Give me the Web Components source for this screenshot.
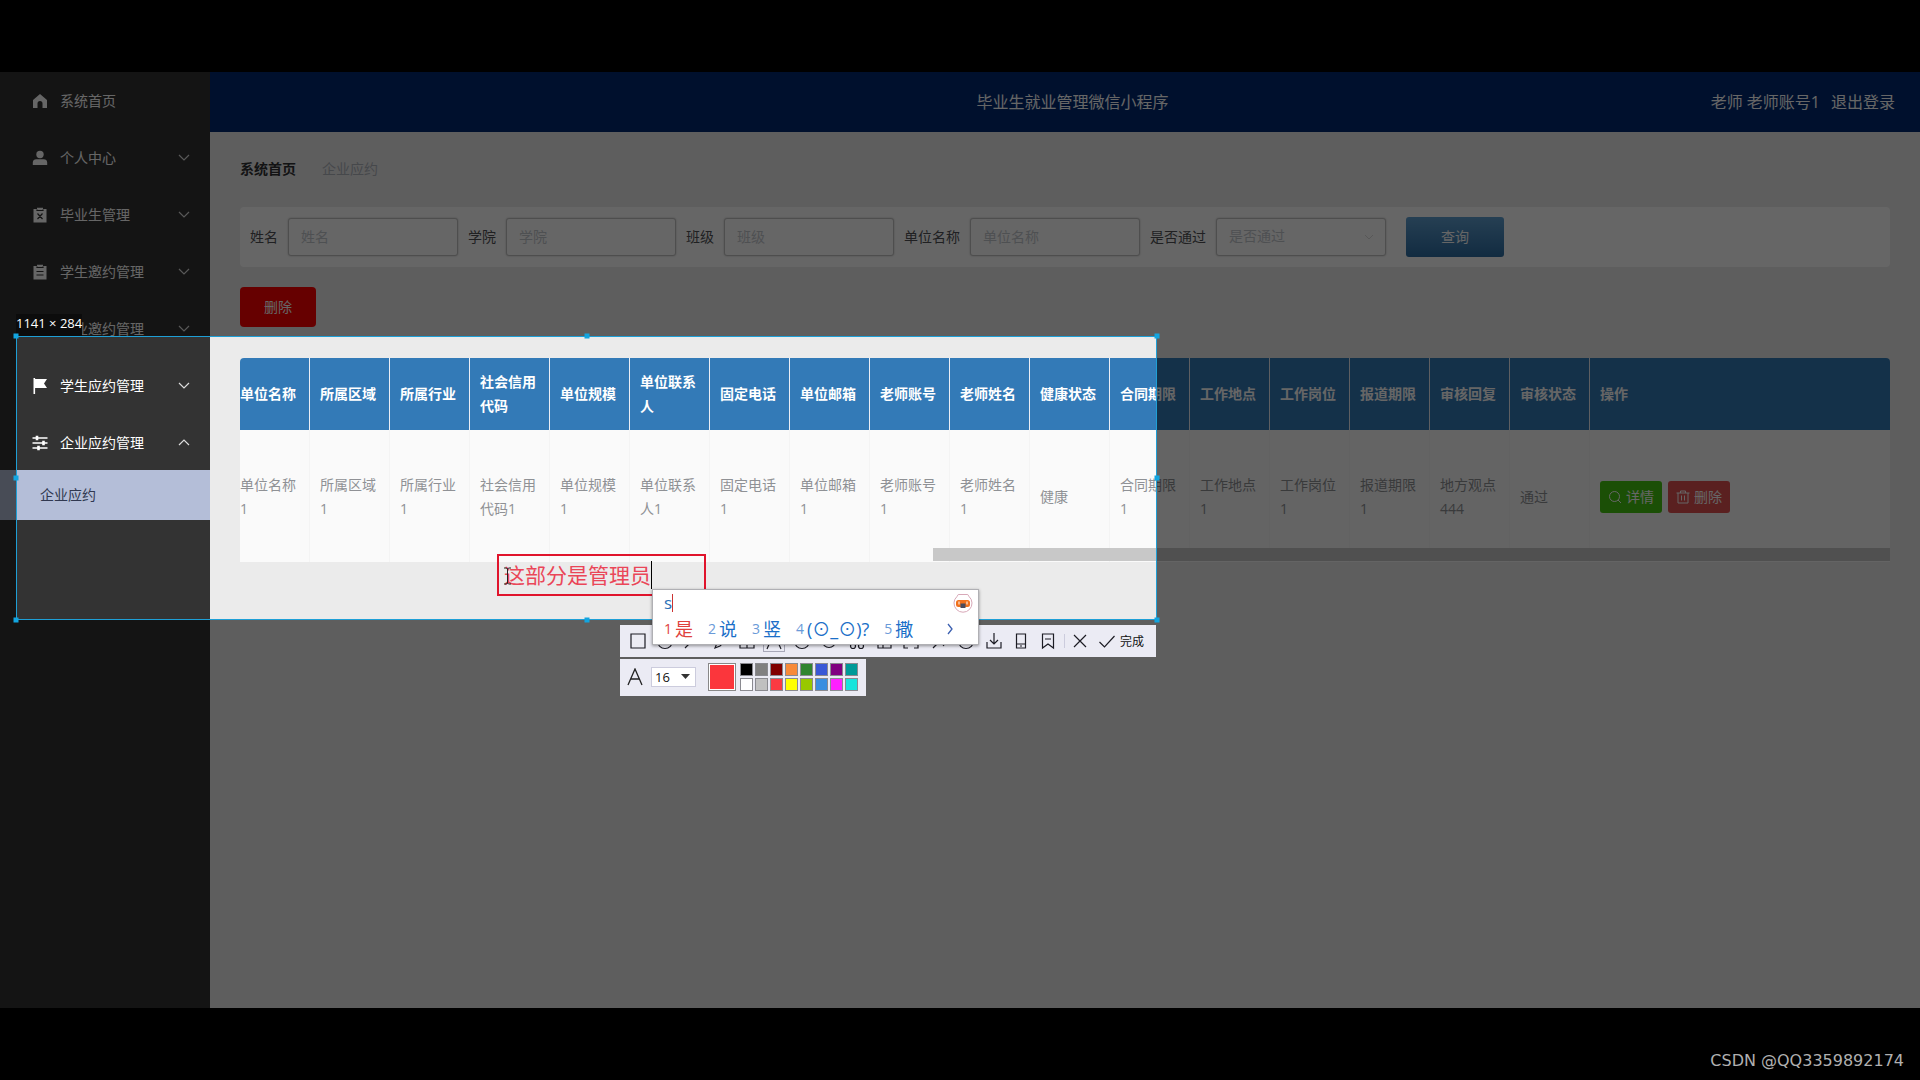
<!DOCTYPE html>
<html lang="zh-CN">
<head>
<meta charset="utf-8">
<title>毕业生就业管理微信小程序</title>
<style>
  html, body { margin: 0; height: 100%; background: #000; }
  body { font: 14px/20px "Open Sans", "Noto Sans CJK SC", sans-serif; overflow: hidden; }
</style>
</head>
<body>
<screen-frame>
  <admin-app>
    <side-nav slot="nav">
      <nav-item icon="home">系统首页</nav-item>
      <nav-item icon="user" arrow="down">个人中心</nav-item>
      <nav-item icon="clipx" arrow="down">毕业生管理</nav-item>
      <nav-item icon="clip" arrow="down">学生邀约管理</nav-item>
      <nav-item icon="grid" arrow="down">企业邀约管理</nav-item>
      <nav-item icon="flag" arrow="down">学生应约管理</nav-item>
      <nav-item icon="sliders" arrow="up">企业应约管理</nav-item>
      <nav-sub>企业应约</nav-sub>
    </side-nav>
    <app-header slot="header">
      毕业生就业管理微信小程序
      <span slot="user">老师 老师账号1</span>
      <span slot="exit">退出登录</span>
    </app-header>
    <crumb-trail></crumb-trail>
    <search-form></search-form>
    <action-bar></action-bar>
    <data-table></data-table>
  </admin-app>
  <snip-selection slot="overlay">
    <snip-note slot="note"></snip-note>
    <snip-toolbar slot="tools"></snip-toolbar>
    <color-bar slot="tools"></color-bar>
    <ime-panel slot="ime"></ime-panel>
  </snip-selection>
  <span slot="mark">CSDN @QQ3359892174</span>
</screen-frame>

<script>
const define = (name, markup) => customElements.define(name, class extends HTMLElement {
  constructor() {
    super();
    this.attachShadow({ mode: 'open' }).innerHTML =
      '<style>*{box-sizing:border-box}:host{display:block}</style>' +
      (typeof markup === 'function' ? markup(this) : markup);
  }
});

const navIcons = {
  home: '<path fill="currentColor" d="M8 1 1 7v8h4.500v-4.500a2.500 2.500 0 0 1 5 0V15H15V7z"/>',
  user: '<circle cx="8" cy="4.500" r="3.700" fill="currentColor"/><path fill="currentColor" d="M.8 15v-2.500A3.500 3.500 0 0 1 4.300 9.300h7.400a3.500 3.500 0 0 1 3.500 3.200V15z"/>',
  clipx: '<path fill="currentColor" d="M1.500 2H5V.8h6V2h3.500v13.500h-13z"/><path stroke="#333" stroke-width="1.200" fill="none" d="M5 2.500v1h6v-1M5.500 6.500l5 5.500M10.500 6.500l-5 5.500"/>',
  clip: '<path fill="currentColor" d="M1.500 2H5V.8h6V2h3.500v13.500h-13z"/><path stroke="#333" stroke-width="1.200" fill="none" d="M5 2.500v1h6v-1M4.500 7.500h7M4.500 11h7"/>',
  grid: '<path fill="currentColor" d="M1 1h6v6H1zM9 1h6v6H9zM1 9h6v6H1zM9 9h6v6H9z"/>',
  flag: '<path fill="currentColor" d="M1.500 0h1.600v1H15l-3 4.500 3 4.500H3.100v6H1.500z"/>',
  sliders: '<path stroke="currentColor" stroke-width="1.600" fill="none" d="M.5 3h15M.5 8h15M.5 13h15"/><path stroke="currentColor" stroke-width="2.600" d="M5 .8v4.400M11.500 5.800v4.400M6.500 10.800v4.400"/>'
};

/* Black frame round the recorded desktop */
define('screen-frame', `<style>
  :host { display: grid; grid-template-rows: 72px 1fr 72px; height: 100vh; }
  .view { grid-row: 2; position: relative; overflow: hidden; }
  footer { grid-row: 3; display: flex; justify-content: flex-end; align-items: center; padding: 34px 16px 0 0;
    font: 16px/24px "DejaVu Sans", sans-serif; color: #b0b0b0; }
</style><div class="view"><slot></slot><slot name="overlay"></slot></div><footer><slot name="mark"></slot></footer>`);

define('admin-app', `<style>
  :host { display: grid; grid-template-columns: 210px 1fr; grid-template-rows: 60px 1fr; height: 100%; background: #ebebeb; }
  ::slotted([slot=nav]) { grid-row: 1 / 3; }
  main { padding: 27px 30px 0; min-width: 0; display: flex; flex-direction: column; }
</style><slot name="nav"></slot><slot name="header"></slot><main><slot></slot></main>`);

define('side-nav', `<style>
  :host { background: #333; } nav { display: flex; flex-direction: column; }
</style><nav><slot></slot></nav>`);

define('nav-item', el => `<style>
  a { display: flex; align-items: center; height: 57px; padding: 0 20px 0 32px; gap: 12px; color: #fff; text-decoration: none; }
  .icon { width: 16px; height: 16px; } .label { flex: 1; }
  .arrow { width: 12px; height: 12px; }
</style><a href="#"><svg class="icon" viewBox="0 0 16 16">${navIcons[el.getAttribute('icon')]}</svg><span class="label"><slot></slot></span>${
  el.hasAttribute('arrow') ? `<svg class="arrow" viewBox="0 0 12 12"><path fill="none" stroke="#ddd" stroke-width="1.200" d="${
    el.getAttribute('arrow') === 'up' ? 'M1 8l5-5 5 5' : 'M1 3l5 5 5-5'}"/></svg>` : ''}</a>`);

define('nav-sub', `<style>
  a { display: flex; align-items: center; height: 50px; margin-top: -1px; padding-left: 40px; background: #b4bed8; color: #303850; text-decoration: none; }
</style><a href="#"><slot></slot></a>`);

define('app-header', `<style>
  :host { background: #002870; color: #fff; font-size: 16px; line-height: 24px; }
  header { display: grid; grid-template-columns: 1fr auto 1fr; align-items: center; height: 100%; padding: 0 25px 0 40px; }
  h1 { font: inherit; margin: 0; grid-column: 2; }
  .right { display: flex; justify-content: flex-end; gap: 11px; }
  a { color: inherit; text-decoration: none; }
</style><header><h1><slot></slot></h1><div class="right"><slot name="user"></slot><a href="#"><slot name="exit"></slot></a></div></header>`);

define('crumb-trail', `<style>
  nav { display: flex; gap: 26px; } a { color: #303133; font-weight: 700; text-decoration: none; }
  span { color: #b0b4bc; }
</style><nav><a href="#">系统首页</a><span>企业应约</span></nav>`);

define('search-form', `<style>
  :host { margin-top: 28px; }
  form { display: flex; align-items: center; gap: 10px; height: 60px; padding: 0 10px; background: #fff; border-radius: 4px; }
  label { display: flex; align-items: center; gap: 10px; color: #505256; }
  input, select { width: 170px; height: 38px; padding: 0 12px 2px; border: 1px solid #c4c4c4; border-radius: 3px;
    background: #fff; font: inherit; color: #c4c8ce; appearance: none; box-shadow: 0 0 2px #bbb; outline: 0; }
  input::placeholder { color: #c4c8ce; opacity: 1; }
  .pick { display: grid; align-items: center; justify-items: end; }
  .pick > * { grid-area: 1 / 1; }
  .pick svg { width: 10px; height: 10px; margin-right: 12px; }
  button { width: 98px; height: 40px; margin-left: 10px; border: 0; border-radius: 3px; font: inherit; color: #fff;
    background: linear-gradient(#5f9fd0, #2d6ca2); }
</style><form>
  <label>姓名<input placeholder="姓名"></label>
  <label>学院<input placeholder="学院"></label>
  <label>班级<input placeholder="班级"></label>
  <label>单位名称<input placeholder="单位名称"></label>
  <label>是否通过<span class="pick"><select><option>是否通过</option></select><svg viewBox="0 0 10 10"><path d="M1 3l4 4 4-4" fill="none" stroke="#ddd"/></svg></span></label>
  <button type="button">查询</button></form>`);

define('action-bar', `<style>
  :host { margin: 20px 0 31px; display: flex; }
  button { width: 76px; height: 40px; border: 0; border-radius: 4px; background: #f00; color: #fff; font: inherit; }
</style><button type="button">删除</button>`);

const columns = [['单位名称','单位名称1'],['所属区域','所属区域1'],['所属行业','所属行业1'],['社会信用代码','社会信用代码1'],
  ['单位规模','单位规模1'],['单位联系人','单位联系人1'],['固定电话','固定电话1'],['单位邮箱','单位邮箱1'],['老师账号','老师账号1'],
  ['老师姓名','老师姓名1'],['健康状态','健康'],['合同期限','合同期限1'],['工作地点','工作地点1'],['工作岗位','工作岗位1'],
  ['报道期限','报道期限1'],['审核回复','地方观点444'],['审核状态','通过']];

define('data-table', `<style>
  :host { overflow: hidden; border-radius: 4px 4px 0 0; display: grid; }
  :host > * { grid-area: 1 / 1; }
  .track { min-width: 0; overflow: hidden; }
  table { width: calc(100% + 10px); margin-left: -10px; table-layout: fixed; border-collapse: separate; border-spacing: 0; line-height: 24px; background: #fafafa; }
  col.c { width: 80px; }
  th, td { padding: 0 10px; text-align: left; vertical-align: middle; word-break: break-all; }
  th { height: 72px; background: #337ab7; color: #fff; border-right: 1px solid #ebeef5; }
  td { height: 132px; padding-top: 2px; color: #8f9195; border-right: 1px solid #f4f4f4; }
  th:last-child, td:last-child { border-right: 0; }
  .ops { display: flex; gap: 6px; }
  button { display: flex; align-items: center; justify-content: center; gap: 4px; width: 62px; height: 32px; padding: 0; border: 0;
    border-radius: 3px; color: #fff; font: inherit; background: #44c60f; }
  button.del { background: #e15050; }
  button svg { width: 14px; height: 14px; fill: none; stroke: #fff; }
  .bar { align-self: end; justify-self: end; width: 58%; height: 13px; background: #c8c8c8; margin-bottom: 1px; }
</style><div class="track"><table>
  <colgroup>${columns.map(() => '<col class="c">').join('')}<col></colgroup>
  <thead><tr>${columns.map(c => `<th>${c[0]}</th>`).join('')}<th>操作</th></tr></thead>
  <tbody><tr>${columns.map(c => `<td>${c[1]}</td>`).join('')}<td><div class="ops">
    <button type="button"><svg viewBox="0 0 14 14"><circle cx="6.500" cy="6.500" r="5"/><path d="M10 10l3 3"/></svg>详情</button>
    <button type="button" class="del"><svg viewBox="0 0 14 14"><path d="M.5 3h13M4.500 3V1h5v2M2 3v10h10V3M5.500 5.500v5M8.500 5.500v5"/></svg>删除</button>
  </div></td></tr></tbody></table></div><div class="bar"></div>`);

/* Selected region: everything outside it is darkened */
define('snip-selection', `<style>
  :host { position: absolute; left: 16px; top: 264px; width: 1141px; height: 284px; }
  .shade { position: absolute; inset: 0; border: 1px solid #1e9fd6; box-shadow: 0 0 0 3000px rgba(0,0,0,.6); }
  .size { position: absolute; left: 0; bottom: 100%; height: 22px; line-height: 18px; font-size: 13px; color: #fff;
    background: #0c0c0c; white-space: nowrap; }
  i { position: absolute; width: 5px; height: 5px; background: #12a5e0; transform: translate(-50%, -50%); }
  .tools { position: absolute; top: calc(100% + 5px); right: 1px; width: 536px; display: flex; flex-direction: column; align-items: flex-start; gap: 2px; }
  .note { position: absolute; left: 481px; top: 218px; }
  .ime { position: absolute; left: 636px; top: 253px; }
</style><div class="shade"></div><div class="size">1141 × 284</div>
${[0, 50, 100].flatMap(x => [0, 50, 100].map(y => x === 50 && y === 50 ? '' : `<i style="left:${x}%;top:${y}%"></i>`)).join('')}
<div class="note"><slot name="note"></slot></div><div class="tools"><slot name="tools"></slot></div><div class="ime"><slot name="ime"></slot></div>`);

define('snip-note', `<style>
  .box { display: flex; align-items: center; width: 209px; height: 42px; padding-left: 5px; border: 2px solid #e0142c; position: relative; }
  input { width: 147px; height: 30px; padding: 0; border: 0; background: none; outline: 0; font: 21px/30px "Open Sans", "Noto Sans CJK SC", sans-serif; color: #ea4658; }
  .caret { width: 1px; height: 28px; background: #000; }
  svg { position: absolute; left: 4px; top: 11px; width: 9px; height: 18px; }
</style><div class="box"><input aria-label="批注" value="这部分是管理员"><span class="caret"></span>
<svg viewBox="0 0 9 18"><path d="M1 1h2.500l1 1 1-1H8M1 17h2.500l1-1 1 1H8M4.500 2v14" fill="none" stroke="#222"/></svg></div>`);

define('ime-panel', `<style>
  .panel { display: flex; flex-direction: column; width: 327px; height: 56px; padding: 0 10px 0 11px; background: #fff; border: 1px solid #b0b0b4; box-shadow: 0 1px 3px rgba(0,0,0,.4); }
  .top { display: flex; justify-content: space-between; align-items: center; height: 25px; }
  .typed { display: flex; align-items: center; font-size: 17px; color: #2b6fb8; }
  .typed b { width: 1px; height: 18px; background: #c33; }
  .top svg { width: 20px; height: 20px; margin-right: -5px; }
  ol { display: flex; align-items: center; gap: 15px; margin: 0; padding: 0; list-style: none; height: 28px; font-size: 18px; line-height: 28px; color: #1a6fc8; white-space: nowrap; }
  li { display: flex; gap: 3px; align-items: center; }
  small { font-size: 14px; color: #6a9ad8; } .on, .on small { color: #e0423c; }
  .more { flex: 1; display: flex; justify-content: flex-end; } .more svg { width: 8px; height: 12px; margin-right: 14px; }
</style><div class="panel"><div class="top"><span class="typed">s<b></b></span>
<svg viewBox="0 0 20 20"><path d="M4 3.500Q5 .5 7 1.500h6q2-1 3 2a9 9 0 1 1-12 0z" fill="#fff" stroke="#d8a8b8"/><rect x="3" y="7" width="14" height="7" rx="2.500" fill="#f0701c"/><path d="M6 8.500v3M14 8.500v3" stroke="#fff"/><path d="M7.500 10.500h5v4.500h-5z" fill="#4a4a5c"/></svg></div>
<ol><li class="on"><small>1</small>是</li><li><small>2</small>说</li><li><small>3</small>竖</li><li><small>4</small>(⊙_⊙)?</li><li><small>5</small>撒</li>
<li class="more"><svg viewBox="0 0 8 12"><path d="M2 1l4 5-4 5" fill="none" stroke="#3b5fb0" stroke-width="1.300"/></svg></li></ol></div>`);

const tools = [
  ['矩形','<path d="M2 2h14v14H2z"/>'],
  ['椭圆','<circle cx="9" cy="9" r="7.500"/>'],
  ['箭头','<path d="M2 16L15 3M8 3h7v7"/>'],
  ['画笔','<path d="M4 16l2-5 8-8 3 3-8 8z"/>'],
  ['马赛克','<path d="M2 2h14v14H2zM2 9h14M9 2v14"/>'],
  ['文字','<path d="M2 17L9 1l7 16M4.500 11h9"/>', 1],
  ['序号','<circle cx="9" cy="9" r="7.500"/><path d="M9 5v8"/>'],
  ['标记','<circle cx="9" cy="9" r="6.500"/>'],
  ['剪切','<circle cx="5" cy="14" r="2.500"/><circle cx="13" cy="14" r="2.500"/><path d="M6 12l7-10M12 12L5 2"/>'],
  ['翻译','<path d="M2 5h7M8 8h8v8H8zM3 9v7h5"/>'],
  ['识别','<path d="M2 6V2h4M12 2h4v4M16 12v4h-4M6 16H2v-4"/>'],
  ['固定','<path d="M3 16l5-5M7 5l7 9M10 2l6 6"/>'],
  ['撤销','<circle cx="9" cy="9" r="7.500"/>'],
  ['保存','<path d="M2 10v6h14v-6M9 1v11M5 8l4 4 4-4"/>'],
  ['手机','<path d="M4.500 2h9v14h-9zM4.500 12h9M8 14h2"/>'],
  ['收藏','<path d="M3.500 2h11v14L9 12l-5.500 4zM6 7h6"/>']
];
const tool = ([label, art, on]) => `<button type="button" aria-label="${label}"${on ? ' class="on"' : ''}><svg viewBox="0 0 18 18">${art}</svg></button>`;

define('snip-toolbar', `<style>
  :host { width: 100%; }
  .bar { display: flex; align-items: center; height: 32px; padding-left: 4px; background: #ebebf4; }
  .group { display: flex; justify-content: space-between; width: 438px; }
  button { display: grid; place-items: center; flex: none; width: 27px; height: 27px; padding: 0; border: 0; background: none; font: 12px/16px "Noto Sans CJK SC", sans-serif; color: #111; }
  svg { width: 18px; height: 18px; fill: none; stroke: #1c1c24; stroke-width: 1.200; }
  .on svg { outline: 1px solid #a8a8b8; outline-offset: 1px; }
  hr { width: 1px; height: 14px; margin: 0 1px 0 2px; border: 0; background: #ccd; }
  .done { display: flex; align-items: center; justify-content: center; gap: 4px; width: 56px; }
</style><div class="bar"><div class="group">${tools.map(tool).join('')}</div><hr>${tool(['取消', '<path d="M3 3l12 12M15 3L3 15"/>'])}
<button type="button" class="done"><svg viewBox="0 0 18 18"><path d="M1.500 10l5 5L16.500 4"/></svg>完成</button></div>`);

const swatches = ['#000','#808080','#800000','#f78a3a','#308430','#3a58d6','#800080','#009a98',
  '#fff','#c0c0c0','#fb3a42','#ff0','#98c800','#3a8ee0','#ff20ff','#18e4dc'];
define('color-bar', `<style>
  .bar { display: flex; align-items: center; width: 246px; height: 37px; padding: 0 7px 2px; background: #ebebf4; }
  .letter { width: 16px; height: 18px; fill: none; stroke: #222; stroke-width: 1.300; }
  .size { display: grid; align-items: center; margin-left: 8px; } .size > * { grid-area: 1 / 1; }
  select { width: 45px; height: 20px; padding: 0 3px; border: 1px solid #ccd; background: #fff; appearance: none; font: 13px/18px "Open Sans", sans-serif; color: #111; }
  .size svg { width: 9px; height: 5px; justify-self: end; margin-right: 6px; }
  .current { width: 28px; height: 28px; margin-left: 12px; padding: 0; border: 1px solid #888; background: #fb363c; box-shadow: inset 0 0 0 1px #fff; }
  .grid { display: grid; grid-template-columns: repeat(8, 13px); gap: 2px; margin-left: 4px; }
  .grid button { width: 13px; height: 13px; padding: 0; border: 1px solid #8a8a90; }
</style><div class="bar"><svg class="letter" viewBox="0 0 16 18"><path d="M1 17L8 1l7 16M3.500 11h9"/></svg>
<span class="size"><select aria-label="字号"><option>16</option></select><svg viewBox="0 0 9 5"><path d="M0 0h9L4.500 5z" fill="#333"/></svg></span>
<button type="button" class="current" aria-label="当前颜色"></button>
<div class="grid">${swatches.map(c => `<button type="button" aria-label="${c}" style="background:${c}"></button>`).join('')}</div></div>`);
</script>
</body>
</html>
